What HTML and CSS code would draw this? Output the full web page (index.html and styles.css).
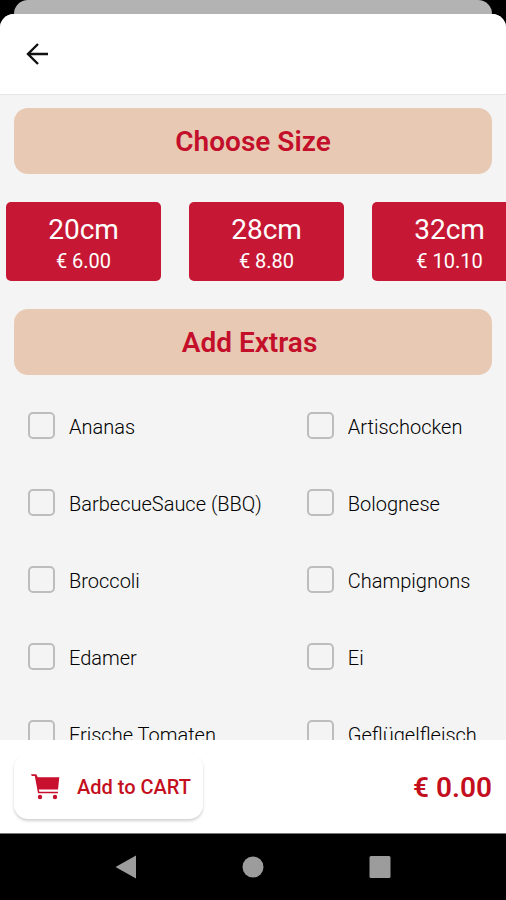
FILE: index.html
```html
<!DOCTYPE html>
<html lang="en">
<head>
<meta charset="utf-8">
<meta name="viewport" content="width=device-width, initial-scale=1">
<title>Choose Size</title>
<link rel="stylesheet" href="styles.css">
</head>
<body>
<div class="backdrop"></div>
<div class="sheet">
  <header class="topbar">
    <button class="back" type="button" aria-label="Back">
      <svg viewBox="0 0 24 24" width="24" height="24" fill="none" stroke="#111" stroke-width="2.400"><path d="M23 12H3M13 2L3 12l10 10"/></svg>
    </button>
  </header>
  <main class="content">
    <h2 class="banner">Choose Size</h2>
    <div class="sizes">
      <button class="size" type="button"><span class="size-name">20cm</span><span class="size-price">€ 6.00</span></button>
      <button class="size" type="button"><span class="size-name">28cm</span><span class="size-price">€ 8.80</span></button>
      <button class="size" type="button"><span class="size-name">32cm</span><span class="size-price">€ 10.10</span></button>
    </div>
    <h2 class="banner">Add Extras&nbsp;</h2>
    <div class="extras">
      <label class="extra"><input type="checkbox"><span>Ananas</span></label>
      <label class="extra"><input type="checkbox"><span>Artischocken</span></label>
      <label class="extra"><input type="checkbox"><span>BarbecueSauce (BBQ)</span></label>
      <label class="extra"><input type="checkbox"><span>Bolognese</span></label>
      <label class="extra"><input type="checkbox"><span>Broccoli</span></label>
      <label class="extra"><input type="checkbox"><span>Champignons</span></label>
      <label class="extra"><input type="checkbox"><span>Edamer</span></label>
      <label class="extra"><input type="checkbox"><span>Ei</span></label>
      <label class="extra"><input type="checkbox"><span>Frische Tomaten</span></label>
      <label class="extra"><input type="checkbox"><span>Geflügelfleisch</span></label>
    </div>
  </main>
  <footer class="cartbar">
    <button class="add" type="button">
      <svg viewBox="0 0 30 28" width="30" height="28" fill="#c8102e"><path d="M0 1.200h5.200l1.600 3H28.300L27 16.500H7.800l.5 2.300H27v1.400H7L3.800 3H.8z"/><circle cx="9" cy="24" r="2.200"/><circle cx="24" cy="24" r="2.200"/></svg>
      <span>Add to CART</span>
    </button>
    <strong class="total">€ 0.00</strong>
  </footer>
</div>
<nav class="sysnav" aria-label="System">
  <button type="button" aria-label="Back"><svg viewBox="0 0 24 24" width="24" height="24"><path d="M1.500 12L22 .5v23z"/></svg></button>
  <button type="button" aria-label="Home"><svg viewBox="0 0 24 24" width="24" height="24"><circle cx="12" cy="12" r="10.500"/></svg></button>
  <button type="button" aria-label="Recents"><svg viewBox="0 0 24 24" width="24" height="24"><rect x="1.500" y="1" width="21" height="22" rx="1.500"/></svg></button>
</nav>
</body>
</html>
```
FILE: styles.css
```css
* {
  box-sizing: border-box;
}

body {
  margin: 0;
  height: 100vh;
  display: flex;
  flex-direction: column;
  overflow: hidden;
  background: #000;
  color: #000;
  font-family: Roboto, "Liberation Sans", sans-serif;
  font-size: 20px;
}

button {
  margin: 0;
  padding: 0;
  border: 0;
  background: none;
  font: inherit;
}

svg {
  display: block;
}

.backdrop {
  flex: none;
  height: 14px;
  margin: 0 14px;
  border-radius: 14px 14px 0 0;
  background: #b3b3b3;
}

.sheet {
  flex: 1;
  min-height: 0;
  display: flex;
  flex-direction: column;
  overflow: hidden;
  border-radius: 14px 14px 0 0;
  background: #f4f4f4;
}

.topbar {
  flex: none;
  display: flex;
  align-items: center;
  height: 81px;
  padding: 0 25px;
  border-bottom: 1px solid #e6e6e6;
  background: #fff;
}

.content {
  flex: 1;
  min-height: 0;
  overflow: hidden;
  padding-top: 13px;
}

.banner {
  margin: 0 14px;
  padding-top: 2px;
  border-radius: 14px;
  background: #e8cab4;
  color: #c40f2b;
  font-size: 28px;
  font-weight: 600;
  line-height: 64px;
  text-align: center;
}

.sizes {
  display: flex;
  gap: 28px;
  margin: 28px 0;
  padding-left: 6px;
  overflow: hidden;
}

.size {
  flex: none;
  display: flex;
  flex-direction: column;
  align-items: center;
  width: 155px;
  padding: 10px 0 6px;
  border-radius: 5px;
  background: #c61834;
  color: #fff;
}

.size-name {
  font-size: 28px;
  line-height: 36px;
}

.size-price {
  line-height: 27px;
}

.extras {
  display: grid;
  grid-template-columns: 7fr 5fr;
  padding: 12px 0 0 28px;
}

.extra {
  display: flex;
  align-items: center;
  gap: 14px;
  height: 77px;
  font-weight: 300;
  white-space: nowrap;
}

.extra span {
  padding-top: 3px;
}

.extra input {
  appearance: none;
  flex: none;
  width: 27px;
  height: 27px;
  margin: 0;
  border: 2px solid #bdbdbd;
  border-radius: 5px;
}

.extra input:checked {
  background: #c61834;
}

.cartbar {
  flex: none;
  display: flex;
  align-items: center;
  justify-content: space-between;
  padding: 14px;
  background: #fff;
  color: #c40f1e;
}

.add {
  display: flex;
  align-items: center;
  gap: 16px;
  height: 65px;
  padding: 0 12px 0 17px;
  border-radius: 14px;
  background: #fff;
  box-shadow: 0 2px 3px rgba(0, 0, 0, 0.18);
  color: inherit;
  font-weight: 500;
}

.total {
  padding-top: 2px;
  font-size: 28px;
  font-weight: 600;
}

.sysnav {
  flex: none;
  display: flex;
  justify-content: center;
  gap: 103px;
  height: 67px;
  border-top: 1px solid #777;
  fill: #9c9c9c;
}

.sysnav button {
  fill: inherit;
}
```
